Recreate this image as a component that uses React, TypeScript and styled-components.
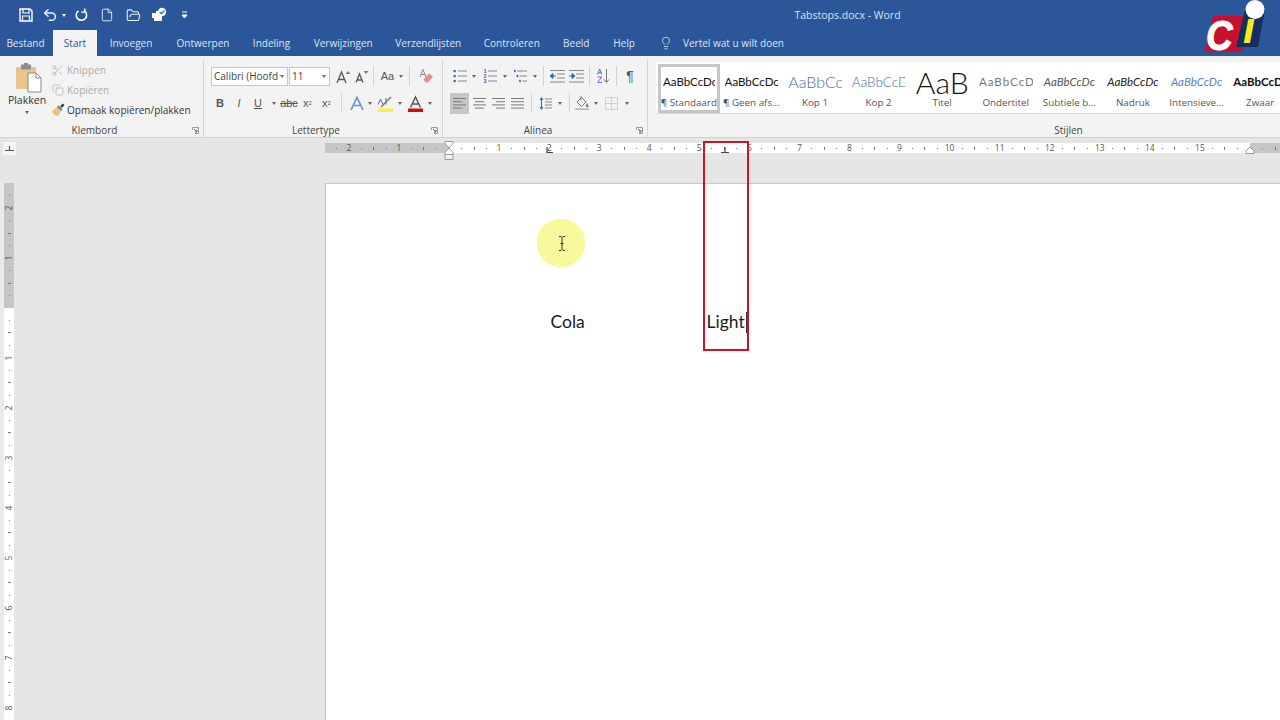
import styled, { createGlobalStyle } from 'styled-components';
import { Undo2, File, FolderOpen, Scissors, Copy, Lightbulb } from 'lucide-react';
import type { ReactNode } from 'react';

const UI_FONT = '"Open Sans", "Liberation Sans", sans-serif';
const DOC_FONT = 'Lato, "Liberation Sans", sans-serif';

const CM = 12.53;
const range = (from: number, to: number) => Array.from({ length: to - from + 1 }, (_, i) => from + i);

const tabs = [
  { label: 'Invoegen', w: 68 },
  { label: 'Ontwerpen', w: 76 },
  { label: 'Indeling', w: 61 },
  { label: 'Verwijzingen', w: 82.5 },
  { label: 'Verzendlijsten', w: 87.5 },
  { label: 'Controleren', w: 79.5 },
  { label: 'Beeld', w: 49.5 },
  { label: 'Help', w: 46 },
];

const styleItems = [
  { label: '¶ Standaard', text: 'AaBbCcDc', size: 11.5, color: '#111', selected: true },
  { label: '¶ Geen afs...', text: 'AaBbCcDc', size: 11.5, color: '#111' },
  { label: 'Kop 1', text: 'AaBbCc', size: 16, color: '#4a6ea8', weight: 300 },
  { label: 'Kop 2', text: 'AaBbCcD', size: 13.5, color: '#4a6ea8', weight: 300 },
  { label: 'Titel', text: 'AaB', size: 30, color: '#111', weight: 300 },
  { label: 'Ondertitel', text: 'AaBbCcD', size: 11.5, color: '#777', spacing: 1 },
  { label: 'Subtiele b...', text: 'AaBbCcDc', size: 11.5, color: '#555', italic: true },
  { label: 'Nadruk', text: 'AaBbCcDc', size: 11.5, color: '#222', italic: true },
  { label: 'Intensieve...', text: 'AaBbCcDc', size: 11.5, color: '#5b7fc7', italic: true },
  { label: 'Zwaar', text: 'AaBbCcDc', size: 11.5, color: '#111', weight: 700 },
];

const GlobalStyle = createGlobalStyle`
  html, body {
    margin: 0;
    height: 100%;
    overflow: hidden;
    background: #e6e6e6;
  }
  * { box-sizing: border-box; }
`;

const Stage = styled.div`
  position: relative;
  width: 1280px;
  height: 720px;
  overflow: hidden;
  display: flex;
  flex-direction: column;
  font-family: ${UI_FONT};
  font-size: 10px;
  color: #444;
`;

const TitleBar = styled.header`
  height: 30px;
  flex: none;
  background: #2b579a;
  display: flex;
  align-items: center;
  position: relative;
  color: #fff;
`;

const QuickTool = styled.span<{ $w: number }>`
  width: ${p => p.$w}px;
  height: 30px;
  flex: none;
  display: flex;
  align-items: center;
  justify-content: center;
  color: #eef2f8;
`;

const QuickCaret = styled.i`
  width: 0;
  height: 0;
  flex: none;
  border-left: 2.5px solid transparent;
  border-right: 2.5px solid transparent;
  border-top: 3px solid #fff;
`;

const Spacer = styled.span<{ $w: number }>`
  flex: none;
  width: ${p => p.$w}px;
`;

const DocTitle = styled.div`
  margin-left: 588.5px;
  width: 120px;
  text-align: center;
  color: #d7e0ee;
  font-size: 10.5px;
  white-space: nowrap;
`;

const TabRow = styled.nav`
  height: 26px;
  flex: none;
  background: #2b579a;
  display: flex;
`;

const Tab = styled.div<{ $w: number; $active?: boolean; $inset?: number }>`
  width: ${p => p.$w}px;
  flex: none;
  display: flex;
  align-items: center;
  justify-content: center;
  white-space: nowrap;
  font-size: 10px;
  padding-right: ${p => p.$inset ?? 0}px;
  color: ${p => (p.$active ? '#2b579a' : '#dde5f1')};
  background: ${p => (p.$active ? '#f3f3f3' : 'transparent')};
`;

const TellMe = styled.div`
  display: flex;
  align-items: center;
  gap: 10px;
  margin-left: 12px;
  color: #dde5f1;
  white-space: nowrap;
`;

const Ribbon = styled.section`
  height: 82px;
  flex: none;
  background: #f3f3f3;
  border-bottom: 1px solid #d2d2d2;
  display: flex;
  overflow: hidden;
`;

const Group = styled.div<{ $w: number }>`
  width: ${p => p.$w}px;
  flex: none;
  display: flex;
  flex-direction: column;
  border-right: 1px solid #d4d4d4;
  margin-top: 4px;
`;

const GroupBody = styled.div`
  flex: 1;
  min-height: 0;
  display: flex;
`;

const GroupFooter = styled.div`
  height: 14px;
  flex: none;
  display: flex;
  align-items: center;
  font-size: 10px;
  color: #444;
`;

const GroupLabel = styled.span`
  flex: 1;
  text-align: center;
`;

const Launcher = styled.span`
  width: 14px;
  flex: none;
  padding-left: 3px;
  display: flex;
  align-items: center;
`;

const PasteButton = styled.div`
  width: 54px;
  margin-right: -4px;
  flex: none;
  display: flex;
  flex-direction: column;
  align-items: center;
  padding-top: 3px;
  color: #333;
`;

const PasteArt = styled.span`
  margin-left: 3px;
  height: 30px;
`;

const PasteLabel = styled.span`
  font-size: 10.5px;
  line-height: 14px;
`;

const PasteCaret = styled.i`
  width: 0;
  height: 0;
  margin-top: 4px;
  border-left: 2.5px solid transparent;
  border-right: 2.5px solid transparent;
  border-top: 3px solid #666;
`;

const ClipList = styled.div`
  display: flex;
  flex-direction: column;
`;

const ClipRow = styled.div<{ $off?: boolean }>`
  height: 20px;
  display: flex;
  align-items: center;
  gap: 2px;
  white-space: nowrap;
  font-size: 10px;
  color: ${p => (p.$off ? '#ababab' : '#333')};
`;

const ClipIcon = styled.span`
  width: 15px;
  display: flex;
  justify-content: center;
`;

const ToolColumn = styled.div`
  display: flex;
  flex-direction: column;
  padding: 6px 0 0 7px;
  gap: 7px;
`;

const ToolRow = styled.div`
  height: 20px;
  display: flex;
  align-items: center;
`;

const Tool = styled.span<{ $w: number; $active?: boolean; $weight?: number; $italic?: boolean; $deco?: string; $size?: number }>`
  width: ${p => p.$w}px;
  height: 21px;
  flex: none;
  display: flex;
  align-items: center;
  justify-content: center;
  color: #555;
  font-family: "Liberation Sans", sans-serif;
  font-size: ${p => p.$size ?? 11}px;
  font-weight: ${p => p.$weight ?? 400};
  font-style: ${p => (p.$italic ? 'italic' : 'normal')};
  text-decoration: ${p => p.$deco ?? 'none'};
  background: ${p => (p.$active ? '#c6c6c6' : 'transparent')};
`;

const Caret = styled.i`
  width: 0;
  height: 0;
  flex: none;
  border-left: 2.5px solid transparent;
  border-right: 2.5px solid transparent;
  border-top: 3px solid #666;
`;

const Divider = styled.span<{ $m: number }>`
  width: 1px;
  height: 20px;
  flex: none;
  margin: 0 ${p => p.$m}px;
  background: #d4d4d4;
`;

const ComboBox = styled.div<{ $w: number }>`
  width: ${p => p.$w}px;
  height: 19px;
  flex: none;
  margin-right: 1px;
  padding: 0 3px 0 2px;
  display: flex;
  align-items: center;
  justify-content: space-between;
  background: #fff;
  border: 1px solid #c6c6c6;
  color: #444;
  font-size: 10px;
  white-space: nowrap;
  overflow: hidden;
`;

const Sub = styled.sub`
  font-size: 6px;
  vertical-align: -2px;
`;

const Sup = styled.sup`
  font-size: 6px;
  vertical-align: 4px;
`;

const Gallery = styled.div`
  margin: 2px 0 0 8px;
  height: 52px;
  flex: none;
  display: flex;
  background: #fff;
  border-bottom: 1px solid #d8d8d8;
  padding-top: 2px;
`;

const GalleryItem = styled.div<{ $selected?: boolean }>`
  width: ${p => (p.$selected ? 61.6 : 63.6)}px;
  margin-left: ${p => (p.$selected ? 2 : 0)}px;
  flex: none;
  display: flex;
  flex-direction: column;
  align-items: center;
  padding: 0 2px;
  border: 3px solid ${p => (p.$selected ? '#c6c6c6' : 'transparent')};
`;

const GalleryPreview = styled.div<{ $size: number; $color: string; $weight?: number; $italic?: boolean; $spacing?: number }>`
  height: 28px;
  width: 100%;
  flex: none;
  overflow: hidden;
  text-align: center;
  white-space: nowrap;
  line-height: 30px;
  font-family: ${DOC_FONT};
  font-size: ${p => p.$size}px;
  font-weight: ${p => p.$weight ?? 400};
  font-style: ${p => (p.$italic ? 'italic' : 'normal')};
  letter-spacing: ${p => p.$spacing ?? 0}px;
  color: ${p => p.$color};
`;

const GalleryLabel = styled.div`
  margin-top: 1px;
  flex: none;
  white-space: nowrap;
  font-size: 9.8px;
  line-height: 14px;
  color: #555;
`;

const RulerStrip = styled.div`
  height: 45px;
  flex: none;
  background: #e6e6e6;
  display: flex;
  align-items: flex-start;
  position: relative;
  padding-top: 5px;
`;

const TabSelectorWell = styled.div`
  width: 324.5px;
  flex: none;
  padding-left: 3px;
  margin-top: -1px;
`;

const TabSelector = styled.div`
  width: 13px;
  height: 13px;
  background: #f6f6f6;
  display: flex;
  align-items: center;
  justify-content: center;
`;

const RulerBand = styled.div`
  flex: 1;
  height: 10px;
  display: flex;
`;

const RulerPart = styled.div<{ $w: number; $gray?: boolean; $end?: boolean }>`
  width: ${p => p.$w}px;
  flex: none;
  display: flex;
  overflow: hidden;
  justify-content: ${p => (p.$end ? 'flex-end' : 'flex-start')};
  background: ${p => (p.$gray ? '#c6c6c6' : '#fff')};
  padding: ${p => (p.$end ? `0 ${CM / 2}px 0 0` : `0 0 0 ${CM / 2}px`)};
`;

const RulerCell = styled.span`
  width: ${CM}px;
  flex: none;
  display: flex;
  align-items: center;
  justify-content: center;
  font-family: ${UI_FONT};
  font-size: 8.5px;
  line-height: 10px;
  color: #555;
`;

const DotMark = styled.i`
  width: 1px;
  height: 1px;
  background: #777;
`;

const LineMark = styled.i`
  width: 1px;
  height: 3px;
  background: #777;
`;

const RulerMarker = styled.svg<{ $x: number; $y: number }>`
  position: absolute;
  left: ${p => p.$x}px;
  top: ${p => p.$y}px;
`;

const Workspace = styled.main`
  flex: 1;
  min-height: 0;
  display: flex;
  background: #e6e6e6;
`;

const Gutter = styled.aside`
  width: 325px;
  flex: none;
  border-left: 4px solid #e9e9ef;
`;

const VRuler = styled.div`
  width: 10px;
  margin-top: -1px;
  display: flex;
  flex-direction: column;
`;

const VPart = styled.div<{ $h?: number; $gray?: boolean; $end?: boolean }>`
  height: ${p => (p.$h ? `${p.$h}px` : 'auto')};
  display: flex;
  flex-direction: column;
  justify-content: ${p => (p.$end ? 'flex-end' : 'flex-start')};
  overflow: hidden;
  background: ${p => (p.$gray ? '#c6c6c6' : '#fff')};
  padding: ${p => (p.$end ? '0 0 6px' : '6px 0 0')};
`;

const VCell = styled.span`
  height: 12.5px;
  flex: none;
  display: flex;
  align-items: center;
  justify-content: center;
  font-size: 8.5px;
  color: #555;
`;

const VNumber = styled.span`
  transform: rotate(-90deg);
  line-height: 10px;
`;

const VDot = styled.i`
  width: 1px;
  height: 1px;
  background: #777;
`;

const VLine = styled.i`
  width: 3px;
  height: 1px;
  background: #777;
`;

const Page = styled.article`
  flex: 1;
  background: #fff;
  border-left: 1px solid #c8c8c8;
  border-top: 1px solid #c8c8c8;
  padding: 126.5px 0 0 224.5px;
  font-family: ${DOC_FONT};
  font-size: 17.5px;
  line-height: 22px;
  color: #1a1a1a;
`;

const TabLine = styled.div`
  display: flex;
`;

const TabCell = styled.span<{ $w: number }>`
  width: ${p => p.$w}px;
  flex: none;
`;

const TextCaret = styled.span`
  display: inline-block;
  width: 1px;
  height: 21px;
  margin-left: 1px;
  vertical-align: -5px;
  background: #333;
`;

const Highlight = styled.div`
  position: absolute;
  left: 703px;
  top: 141px;
  width: 46px;
  height: 210px;
  border: 2.5px solid #cf1126;
  pointer-events: none;
`;

const MouseHalo = styled.div`
  position: absolute;
  left: 537px;
  top: 219px;
  width: 48px;
  height: 48px;
  border-radius: 50%;
  background: #f8f89c;
  box-shadow: 0 0 1.5px #f8f89c;
  display: flex;
  align-items: center;
  justify-content: center;
  padding-left: 1px;
`;

const Logo = styled.svg`
  position: absolute;
  left: 1190px;
  top: 0;
`;

function Glyph({ w = 16, h = 16, children }: { w?: number; h?: number; children: ReactNode }) {
  return (
    <svg width={w} height={h} viewBox={`0 0 ${w} ${h}`} fill="none">
      {children}
    </svg>
  );
}

const SaveIcon = () => (
  <Glyph w={14} h={14}>
    <path d="M1 1h10l2 2v10H1z" stroke="#fff" strokeWidth="1.4" />
    <path d="M4 1v4h6V1M3.5 13V8h7v5" stroke="#fff" strokeWidth="1.2" />
  </Glyph>
);

const RedoIcon = () => (
  <Glyph w={14} h={14}>
    <path d="M4.5 2.8A5.2 5.2 0 1 0 10 2.6" stroke="#fff" strokeWidth="1.6" />
    <path d="M10.8 0.5v3.6H7.2" stroke="#fff" strokeWidth="1.4" />
  </Glyph>
);

const TouchIcon = () => (
  <Glyph w={16} h={16}>
    <path d="M1 6h4v-2h3v2h3v8H3v-3H1z" fill="#fff" />
    <circle cx="11" cy="5" r="4.2" fill="#fff" />
    <path d="M8.8 5l1.6 1.6L13.4 3.4" stroke="#2b579a" strokeWidth="1.3" />
  </Glyph>
);

const QuickMoreIcon = () => (
  <Glyph w={7} h={8}>
    <path d="M1 1h5M1 4l2.5 3L6 4z" stroke="#fff" strokeWidth="1" fill="#fff" />
  </Glyph>
);

const PasteIcon = () => (
  <Glyph w={28} h={30}>
    <rect x="1" y="4" width="20" height="22" fill="#e8c58a" />
    <rect x="6" y="1.5" width="10" height="5" fill="#8d8d8d" />
    <rect x="9" y="0" width="4" height="3" fill="#8d8d8d" />
    <path d="M13 10h8l5 5v14H13z" fill="#fff" stroke="#8a8a8a" />
    <path d="M21 10v5h5" stroke="#8a8a8a" />
  </Glyph>
);

const BrushIcon = () => (
  <Glyph w={14} h={14}>
    <path d="M1 8l5-4 4 4-3 5C5 13 2 12 1 8z" fill="#ecc477" />
    <path d="M6 4l4 4 1.5-1.5-4-4z" fill="#777" />
    <path d="M9 3l3-2.4 1.4 1.4L11 5z" fill="#3f3f3f" />
  </Glyph>
);

const GrowFontIcon = ({ down }: { down?: boolean }) => (
  <Glyph w={15} h={15}>
    <path d={down ? 'M2 13.5L5.5 5 9 13.5M3.2 11h4.6' : 'M1 14L5.5 3 10 14M2.6 10.5h5.8'} stroke="#555" strokeWidth="1.3" />
    <path d={down ? 'M9.5 2h5L12 5z' : 'M9.5 5h5L12 2z'} fill="#5f7fb4" />
  </Glyph>
);

const EraserIcon = () => (
  <Glyph w={16} h={16}>
    <path d="M2 9L5 1.5 8 9M3 6.5h4" stroke="#8a8a8a" strokeWidth="1" />
    <path d="M5.5 11.5l5.5-6 4 3-5 6h-2.5z" fill="#ef8b8f" />
  </Glyph>
);

const ColorIcon = ({ letter, bar }: { letter: 'outline' | 'mark' | 'color'; bar?: string }) => (
  <Glyph w={17} h={17}>
    {letter === 'outline' && (
      <path d="M2 15L8 2.5 14 15M4.6 10.5h6.8" stroke="#6d93c9" strokeWidth="1.7" />
    )}
    {letter === 'mark' && (
      <>
        <path d="M1 9.5L3.5 4 6 9.5M9 3v6.5" stroke="#666" strokeWidth="1" />
        <path d="M4 12L14 2" stroke="#7a7a7a" strokeWidth="1.4" />
      </>
    )}
    {letter === 'color' && <path d="M3.5 12.5L8.5 2l5 10.5M5.4 9h6.2" stroke="#555" strokeWidth="1.4" />}
    {bar && <rect x="1" y="13.5" width="15" height="3.5" fill={bar} />}
  </Glyph>
);

const ListIcon = ({ kind }: { kind: 'bullet' | 'number' | 'multi' }) => (
  <Glyph w={14} h={14}>
    {[2, 7, 12].map((y, i) => (
      <g key={y}>
        {kind === 'bullet' && <rect x="0.5" y={y - 1} width="2.2" height="2.2" fill="#2f6ab3" />}
        {kind === 'number' && (
          <text x="0.5" y={y + 2} fontSize="5.5" fontWeight="700" fontFamily="Liberation Sans" fill={i === 1 ? '#7a5fb0' : '#2f6ab3'}>
            {i + 1}
          </text>
        )}
        {kind === 'multi' && <rect x={i * 2.6} y={y - 1.2} width="1.6" height="2.4" fill="#2f6ab3" />}
        <rect x={kind === 'multi' ? 3 + i * 2.6 : 5} y={y - 0.5} width={kind === 'multi' ? 10 - i * 2.6 : 9} height="1" fill="#888" />
      </g>
    ))}
  </Glyph>
);

const IndentIcon = ({ increase }: { increase?: boolean }) => (
  <Glyph w={15} h={13}>
    <rect x="0" y="0" width="15" height="1" fill="#888" />
    <rect x="7" y="3.5" width="8" height="1" fill="#888" />
    <rect x="7" y="7.5" width="8" height="1" fill="#888" />
    <rect x="0" y="11.5" width="15" height="1" fill="#888" />
    <path d={increase ? 'M0 6h3.5M3 3.5L6 6 3 8.5z' : 'M2.5 6H6M3 3.5L0 6l3 2.5z'} stroke="#2f6ab3" fill="#2f6ab3" />
  </Glyph>
);

const SortIcon = () => (
  <Glyph w={15} h={16}>
    <path d="M1.5 6.5L3.7 1l2.2 5.5M2.3 4.8h2.8" stroke="#2f6ab3" strokeWidth="0.9" />
    <path d="M1.5 9h4.2l-4 5.5h4.4" stroke="#8a4bb0" strokeWidth="0.9" />
    <path d="M10.5 1v13M8 11.5l2.5 3 2.5-3" stroke="#777" strokeWidth="1" />
  </Glyph>
);

const AlignIcon = ({ mode }: { mode: 'left' | 'center' | 'right' | 'justify' }) => {
  const rows = [13, 9, 13, 9];
  return (
    <Glyph w={13} h={11}>
      {rows.map((len, i) => {
        const w = mode === 'justify' ? 13 : len;
        const x = mode === 'left' || mode === 'justify' ? 0 : mode === 'center' ? (13 - w) / 2 : 13 - w;
        return <rect key={i} x={x} y={i * 3.2} width={w} height="1" fill="#7b7b7b" />;
      })}
    </Glyph>
  );
};

const SpacingIcon = () => (
  <Glyph w={13} h={15}>
    <path d="M2.5 2v11" stroke="#2f6ab3" strokeWidth="1" />
    <path d="M0.5 4l2-3 2 3zM0.5 11l2 3 2-3z" fill="#2f6ab3" />
    <path d="M6 3h7M6 6h7M6 9h7M6 12h7" stroke="#888" />
  </Glyph>
);

const ShadeIcon = () => (
  <Glyph w={16} h={16}>
    <path d="M3 7l4.5-4.5L12 7l-4.5 4.5z" fill="#f4f4f4" stroke="#777" />
    <path d="M7 1v4" stroke="#777" />
    <path d="M13 8c1 1.5 1.6 2.4 1.6 3a1.5 1.5 0 0 1-3 0c0-.6.6-1.5 1.4-3z" fill="#8a8a8a" />
    <rect x="1" y="13.5" width="14" height="1.5" fill="#b5b5b5" />
  </Glyph>
);

const BordersIcon = () => (
  <Glyph w={13} h={13}>
    <path d="M.5.5h12v12H.5zM6.5.5v12M.5 6.5h12" stroke="#b2b2b2" strokeDasharray="1 1" />
  </Glyph>
);

const LauncherIcon = () => (
  <Glyph w={7} h={7}>
    <path d="M.5 3V.5H6.5V6.5H3" stroke="#999" />
    <path d="M2 2l3 3M5 3v2H3" stroke="#666" />
  </Glyph>
);

const IBeam = () => (
  <Glyph w={8} h={15}>
    <path d="M1 .5h2l1 1 1-1h2M4 1.5v12M1 14.5h2l1-1 1 1h2M2.5 7.5h3" stroke="#333" strokeWidth="1" />
  </Glyph>
);

function HRulerMark({ i }: { i: number }) {
  if (i % 4 === 0) return <RulerCell>{Math.abs(i / 4)}</RulerCell>;
  if (Math.abs(i % 4) === 2) return <RulerCell><LineMark /></RulerCell>;
  return <RulerCell><DotMark /></RulerCell>;
}

function VRulerMark({ i }: { i: number }) {
  if (i % 4 === 0) return <VCell><VNumber>{Math.abs(i / 4)}</VNumber></VCell>;
  if (Math.abs(i % 4) === 2) return <VCell><VLine /></VCell>;
  return <VCell><VDot /></VCell>;
}

export default function App() {
  return (
    <Stage>
      <GlobalStyle />

      <TitleBar>
        <Spacer $w={15} />
        <QuickTool $w={21}><SaveIcon /></QuickTool>
        <Spacer $w={2} />
        <QuickTool $w={24}><Undo2 size={16} strokeWidth={2.2} /></QuickTool>
        <QuickTool $w={3}><QuickCaret /></QuickTool>
        <QuickTool $w={32}><RedoIcon /></QuickTool>
        <QuickTool $w={20}><File size={14} strokeWidth={1.5} /></QuickTool>
        <QuickTool $w={32}><FolderOpen size={15} strokeWidth={1.7} /></QuickTool>
        <QuickTool $w={20}><TouchIcon /></QuickTool>
        <QuickTool $w={30}><QuickMoreIcon /></QuickTool>
        <DocTitle>Tabstops.docx - Word</DocTitle>
      </TitleBar>

      <TabRow>
        <Tab $w={53} $inset={2}>Bestand</Tab>
        <Tab $w={44} $active>Start</Tab>
        {tabs.map(t => (
          <Tab key={t.label} $w={t.w}>{t.label}</Tab>
        ))}
        <TellMe>
          <Lightbulb size={14} strokeWidth={1.4} />
          <span>Vertel wat u wilt doen</span>
        </TellMe>
      </TabRow>

      <Ribbon>
        <Group $w={204}>
          <GroupBody>
            <PasteButton>
              <PasteArt><PasteIcon /></PasteArt>
              <PasteLabel>Plakken</PasteLabel>
              <PasteCaret />
            </PasteButton>
            <ClipList>
              <ClipRow $off>
                <ClipIcon><Scissors size={13} strokeWidth={1.3} /></ClipIcon>
                Knippen
              </ClipRow>
              <ClipRow $off>
                <ClipIcon><Copy size={12} strokeWidth={1.3} /></ClipIcon>
                Kopiëren
              </ClipRow>
              <ClipRow>
                <ClipIcon><BrushIcon /></ClipIcon>
                Opmaak kopiëren/plakken
              </ClipRow>
            </ClipList>
          </GroupBody>
          <GroupFooter>
            <GroupLabel>Klembord</GroupLabel>
            <Launcher><LauncherIcon /></Launcher>
          </GroupFooter>
        </Group>

        <Group $w={239}>
          <GroupBody>
            <ToolColumn>
              <ToolRow>
                <ComboBox $w={77}>Calibri (Hoofd<Caret /></ComboBox>
                <ComboBox $w={41}>11<Caret /></ComboBox>
                <Spacer $w={3} />
                <Tool $w={18}><GrowFontIcon /></Tool>
                <Tool $w={18}><GrowFontIcon down /></Tool>
                <Divider $m={3} />
                <Tool $w={21}>Aa</Tool>
                <Tool $w={6}><Caret /></Tool>
                <Divider $m={5} />
                <Tool $w={21}><EraserIcon /></Tool>
              </ToolRow>
              <ToolRow>
                <Tool $w={18} $weight={700}>B</Tool>
                <Tool $w={20} $italic>I</Tool>
                <Tool $w={18} $deco="underline">U</Tool>
                <Tool $w={13}><Caret /></Tool>
                <Tool $w={18} $deco="line-through">abc</Tool>
                <Tool $w={19}>x<Sub>2</Sub></Tool>
                <Tool $w={19}>x<Sup>2</Sup></Tool>
                <Divider $m={5} />
                <Tool $w={20}><ColorIcon letter="outline" /></Tool>
                <Tool $w={6}><Caret /></Tool>
                <Tool $w={24}><ColorIcon letter="mark" bar="#f6f24a" /></Tool>
                <Tool $w={6}><Caret /></Tool>
                <Tool $w={24}><ColorIcon letter="color" bar="#d40d12" /></Tool>
                <Tool $w={6}><Caret /></Tool>
              </ToolRow>
            </ToolColumn>
          </GroupBody>
          <GroupFooter>
            <GroupLabel>Lettertype</GroupLabel>
            <Launcher><LauncherIcon /></Launcher>
          </GroupFooter>
        </Group>

        <Group $w={205}>
          <GroupBody>
            <ToolColumn>
              <ToolRow>
                <Tool $w={19}><ListIcon kind="bullet" /></Tool>
                <Tool $w={10}><Caret /></Tool>
                <Tool $w={21}><ListIcon kind="number" /></Tool>
                <Tool $w={10}><Caret /></Tool>
                <Tool $w={21}><ListIcon kind="multi" /></Tool>
                <Tool $w={8}><Caret /></Tool>
                <Divider $m={4} />
                <Tool $w={19}><IndentIcon /></Tool>
                <Tool $w={19}><IndentIcon increase /></Tool>
                <Divider $m={3} />
                <Tool $w={20}><SortIcon /></Tool>
                <Divider $m={3} />
                <Tool $w={20} $size={14}>¶</Tool>
              </ToolRow>
              <ToolRow>
                <Tool $w={19} $active><AlignIcon mode="left" /></Tool>
                <Tool $w={20}><AlignIcon mode="center" /></Tool>
                <Tool $w={19}><AlignIcon mode="right" /></Tool>
                <Tool $w={19}><AlignIcon mode="justify" /></Tool>
                <Divider $m={4} />
                <Tool $w={18}><SpacingIcon /></Tool>
                <Tool $w={12}><Caret /></Tool>
                <Divider $m={3} />
                <Tool $w={18}><ShadeIcon /></Tool>
                <Tool $w={10}><Caret /></Tool>
                <Tool $w={20}><BordersIcon /></Tool>
                <Tool $w={12}><Caret /></Tool>
              </ToolRow>
            </ToolColumn>
          </GroupBody>
          <GroupFooter>
            <GroupLabel>Alinea</GroupLabel>
            <Launcher><LauncherIcon /></Launcher>
          </GroupFooter>
        </Group>

        <Group $w={842}>
          <GroupBody>
            <Gallery>
              {styleItems.map(s => (
                <GalleryItem key={s.label} $selected={s.selected}>
                  <GalleryPreview $size={s.size} $color={s.color} $weight={s.weight} $italic={s.italic} $spacing={s.spacing}>
                    {s.text}
                  </GalleryPreview>
                  <GalleryLabel>{s.label}</GalleryLabel>
                </GalleryItem>
              ))}
            </Gallery>
          </GroupBody>
          <GroupFooter>
            <GroupLabel>Stijlen</GroupLabel>
          </GroupFooter>
        </Group>
      </Ribbon>

      <RulerStrip>
        <TabSelectorWell>
          <TabSelector>
            <Glyph w={9} h={6}>
              <path d="M4.5 0v4M0 4.5h9" stroke="#555" strokeWidth="1.2" />
            </Glyph>
          </TabSelector>
        </TabSelectorWell>
        <RulerBand>
          <RulerPart $w={124.5} $gray $end>
            {range(-9, -1).map(i => <HRulerMark key={i} i={i} />)}
          </RulerPart>
          <RulerPart $w={801}>
            {range(1, 63).map(i => <HRulerMark key={i} i={i} />)}
          </RulerPart>
          <RulerPart $w={30} $gray>
            {range(65, 67).map(i => <HRulerMark key={i} i={i} />)}
          </RulerPart>
        </RulerBand>
        <RulerMarker $x={444} $y={3} width="10" height="19" viewBox="0 0 10 19">
          <path d="M1 .5h8v2L5 7 1 2.5zM5 7l4 4.5v2H1v-2z" fill="#fff" stroke="#9a9a9a" />
          <path d="M1 13.5h8v5H1z" fill="#f2f2f2" stroke="#9a9a9a" />
        </RulerMarker>
        <RulerMarker $x={546} $y={9} width="8" height="7" viewBox="0 0 8 7">
          <path d="M1 0v5.5h6" stroke="#444" strokeWidth="1.2" fill="none" />
        </RulerMarker>
        <RulerMarker $x={720} $y={9} width="10" height="7" viewBox="0 0 10 7">
          <path d="M5 0v5.5M1 5.5h8" stroke="#444" strokeWidth="1.2" fill="none" />
        </RulerMarker>
        <RulerMarker $x={1245} $y={8} width="10" height="8" viewBox="0 0 10 8">
          <path d="M1 7.5V5l4-4 4 4v2.5z" fill="#fff" stroke="#9a9a9a" />
        </RulerMarker>
      </RulerStrip>

      <Workspace>
        <Gutter>
          <VRuler>
            <VPart $h={126} $gray $end>
              {range(-9, -1).map(i => <VRulerMark key={i} i={i} />)}
            </VPart>
            <VPart>
              {range(1, 33).map(i => <VRulerMark key={i} i={i} />)}
            </VPart>
          </VRuler>
        </Gutter>
        <Page>
          <TabLine>
            <TabCell $w={156}>Cola</TabCell>
            <TabCell $w={60}>Light<TextCaret /></TabCell>
          </TabLine>
        </Page>
      </Workspace>

      <Highlight />
      <MouseHalo><IBeam /></MouseHalo>

      <Logo width="90" height="60" viewBox="0 0 90 60">
        <polygon points="23,16 58,16 52,52 15,52" fill="#c8102e" />
        <text transform="translate(16 50) scale(0.88 1)" fontFamily="Liberation Sans" fontWeight="700" fontStyle="italic" fontSize="42" fill="#fff" stroke="#fff" strokeWidth="1">C</text>
        <polygon points="55,10 75,10 68,47 46,47" fill="#12305f" />
        <text x="53" y="43" fontFamily="Liberation Sans" fontWeight="700" fontStyle="italic" fontSize="44" fill="#f5ec1c">ı</text>
        <circle cx="65" cy="9.5" r="9.5" fill="#fff" />
      </Logo>
    </Stage>
  );
}
